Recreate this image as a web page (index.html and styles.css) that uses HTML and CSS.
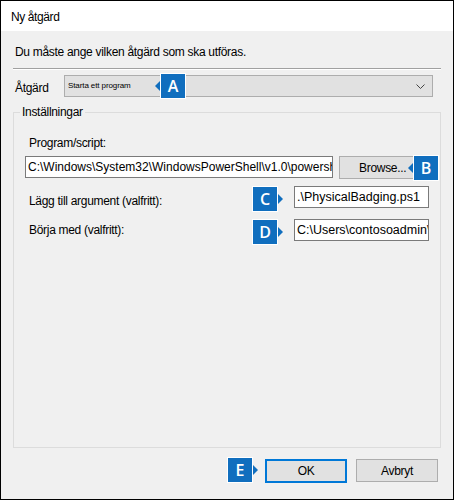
FILE: index.html
```html
<!DOCTYPE html>
<html lang="sv">
<head>
<meta charset="utf-8">
<title>Ny åtgärd</title>
<link rel="stylesheet" href="styles.css">
</head>
<body>
<div class="window">
  <div class="titlebar">Ny åtgärd</div>
  <div class="content">
    <div class="intro">Du måste ange vilken åtgärd som ska utföras.</div>
    <div class="separator"></div>
    <div class="action-row">
      <span class="action-label">Åtgärd</span>
      <div class="combo">
        <span class="combo-text">Starta ett program</span>
        <svg class="chevron" width="9" height="5" viewBox="0 0 9 5"><path d="M0.5 0.5 L4.5 4.5 L8.5 0.5" fill="none" stroke="#444" stroke-width="1"/></svg>
        <span class="badge badge-left badge-a">A</span>
      </div>
    </div>
    <fieldset class="group">
      <legend>Inställningar</legend>
      <div class="field-label">Program/script:</div>
      <div class="program-row">
        <div class="textbox program-box">C:\Windows\System32\WindowsPowerShell\v1.0\powershell.exe</div>
        <div class="button browse">Browse...</div>
        <span class="badge badge-left badge-b">B</span>
      </div>
      <div class="opt-row row-c">
        <span class="opt-label">Lägg till argument (valfritt):</span>
        <span class="badge badge-right badge-row">C</span>
        <div class="textbox opt-box">.\PhysicalBadging.ps1</div>
      </div>
      <div class="opt-row row-d">
        <span class="opt-label">Börja med (valfritt):</span>
        <span class="badge badge-right badge-row">D</span>
        <div class="textbox opt-box">C:\Users\contosoadmin\Documents</div>
      </div>
    </fieldset>
    <div class="footer">
      <span class="badge badge-right badge-e">E</span>
      <div class="button ok">OK</div>
      <div class="button cancel">Avbryt</div>
    </div>
  </div>
</div>
</body>
</html>
```
FILE: styles.css
```css
* { box-sizing: border-box; }
body {
  margin: 0;
  font-family: "Liberation Sans", Arial, sans-serif;
  font-size: 12px;
  letter-spacing: -0.3px;
  color: #000;
}
.window {
  width: 454px;
  height: 500px;
  border: 1px solid #000;
  background: #f0f0f0;
  display: flex;
  flex-direction: column;
}
.titlebar {
  height: 30px;
  background: #fff;
  padding-left: 10px;
  display: flex;
  align-items: center;
  padding-top: 1px;
  letter-spacing: -0.4px;
}
.content {
  padding: 0 12px;
  display: flex;
  flex-direction: column;
}
.intro {
  margin-top: 13px;
  line-height: 16px;
  padding-left: 2px;
}
.separator {
  margin-top: 8px;
  height: 2px;
  border-top: 1px solid #a0a0a0;
  border-bottom: 1px solid #fff;
}
.action-row {
  margin-top: 5px;
  display: flex;
  align-items: center;
  padding-right: 8px;
}
.action-label {
  width: 51px;
  padding-left: 2px;
  padding-top: 3px;
}
.combo {
  position: relative;
  flex: 1;
  height: 22px;
  background: #e1e1e1;
  border: 1px solid #adadad;
  display: flex;
  align-items: center;
  padding-left: 3px;
  padding-right: 7px;
}
.combo-text {
  font-size: 8px;
  letter-spacing: -0.1px;
  flex: 1;
  padding-bottom: 2px;
}
.chevron { display: block; }
.badge {
  position: absolute;
  width: 26px;
  height: 26px;
  background: #106ebe;
  border: 1px solid #fff;
  color: #fff;
  font-family: "Open Sans", "Noto Sans", sans-serif;
  font-weight: 600;
  font-size: 16px;
  letter-spacing: 0;
  display: flex;
  align-items: center;
  justify-content: center;
}
.badge-left::before,
.badge-right::after {
  content: "";
  position: absolute;
  top: 50%;
  margin-top: -5px;
  border-top: 5px solid transparent;
  border-bottom: 5px solid transparent;
}
.badge-left::before {
  left: -6px;
  border-right: 5px solid #106ebe;
}
.badge-right::after {
  right: -6px;
  border-left: 5px solid #106ebe;
}
.badge-a { left: 95px; top: -3px; }
.group {
  margin: 7px 0 0 0;
  padding: 0;
  height: 344px;
  border: 1px solid #dcdcdc;
  min-width: 0;
}
.group legend {
  margin-left: 6px;
  padding: 0 2px;
  line-height: 16px;
}
.field-label {
  margin-top: 15px;
  padding-left: 15px;
  line-height: 16px;
}
.program-row {
  position: relative;
  margin-top: 5px;
  display: flex;
  align-items: flex-start;
  height: 23px;
  padding-left: 11px;
}
.textbox {
  height: 22px;
  background: #fff;
  border: 1px solid #7a7a7a;
  font-size: 12.5px;
  letter-spacing: 0;
  line-height: 20px;
  padding-left: 2px;
  white-space: nowrap;
  overflow: hidden;
}
.program-box { width: 308px; font-size: 12px; }
.button {
  height: 23px;
  background: #e1e1e1;
  border: 1px solid #adadad;
  display: flex;
  align-items: center;
  justify-content: center;
  font-size: 12px;
}
.browse {
  margin-left: 6px;
  width: 76px;
  justify-content: flex-start;
  padding-left: 19px;
}
.badge-b { left: 399px; top: -1px; }
.opt-row {
  position: relative;
  display: flex;
  align-items: flex-start;
  padding-right: 11px;
}
.row-c { margin-top: 7px; }
.row-d { margin-top: 10px; }
.opt-label {
  flex: 1;
  padding-left: 15px;
  line-height: 16px;
}
.row-c .opt-label { padding-top: 7px; }
.row-d .opt-label { padding-top: 3px; }
.opt-box { width: 135px; }
.badge-row { left: 238px; top: 0; }
.footer {
  position: relative;
  margin-top: 11px;
  display: flex;
  justify-content: flex-end;
  align-items: flex-start;
  padding-right: 3px;
  gap: 9px;
}
.ok {
  width: 82px;
  height: 24px;
  border: 2px solid #0078d7;
}
.cancel { width: 82px; }
.badge-e { left: 214px; top: -2px; }
```
